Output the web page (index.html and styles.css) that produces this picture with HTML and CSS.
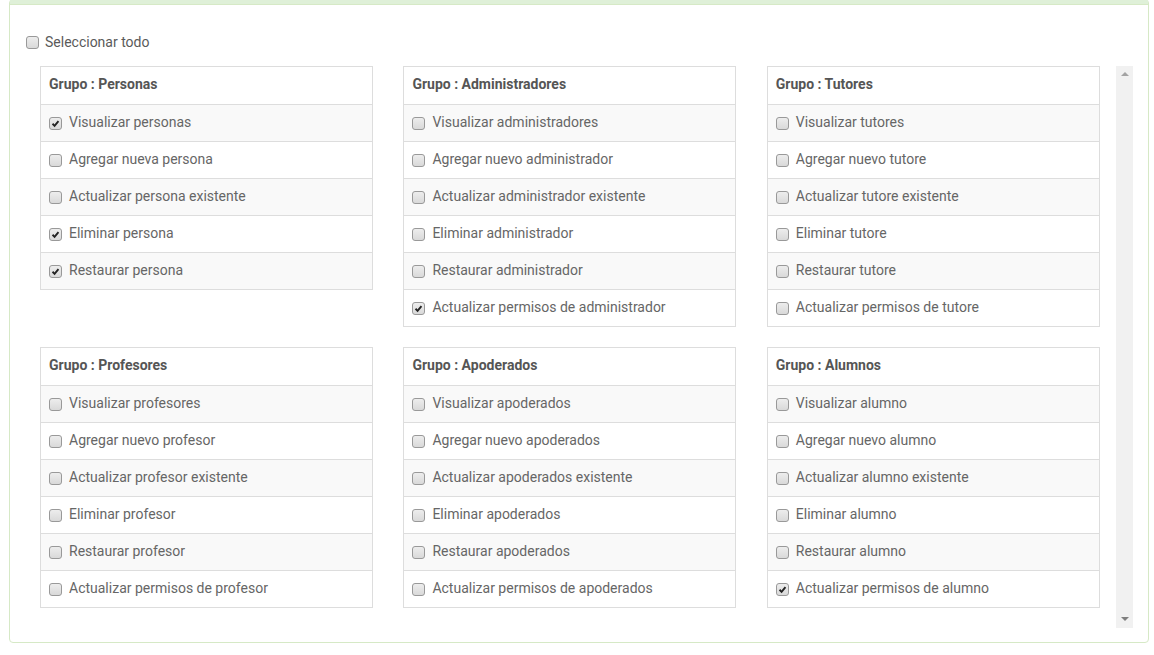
FILE: index.html
```html
<!DOCTYPE html>
<html lang="es">
<head>
<meta charset="utf-8">
<title>Permisos</title>
<link rel="stylesheet" href="styles.css">
</head>
<body>
<div class="panel">
  <div class="panel-heading"></div>
  <div class="panel-body">
    <label class="select-all"><span class="cb"></span>Seleccionar todo</label>
    <div class="scroll">
      <div class="scroll-content">
        <div class="group">
          <div class="group-head">Grupo : Personas</div>
          <div class="row"><span class="cb on"><svg viewBox="0 0 13 13"><path d="M3 6.8 5.4 9.2 10 3.6"/></svg></span>Visualizar personas</div>
          <div class="row"><span class="cb"></span>Agregar nueva persona</div>
          <div class="row"><span class="cb"></span>Actualizar persona existente</div>
          <div class="row"><span class="cb on"><svg viewBox="0 0 13 13"><path d="M3 6.8 5.4 9.2 10 3.6"/></svg></span>Eliminar persona</div>
          <div class="row"><span class="cb on"><svg viewBox="0 0 13 13"><path d="M3 6.8 5.4 9.2 10 3.6"/></svg></span>Restaurar persona</div>
        </div>
        <div class="group">
          <div class="group-head">Grupo : Administradores</div>
          <div class="row"><span class="cb"></span>Visualizar administradores</div>
          <div class="row"><span class="cb"></span>Agregar nuevo administrador</div>
          <div class="row"><span class="cb"></span>Actualizar administrador existente</div>
          <div class="row"><span class="cb"></span>Eliminar administrador</div>
          <div class="row"><span class="cb"></span>Restaurar administrador</div>
          <div class="row"><span class="cb on"><svg viewBox="0 0 13 13"><path d="M3 6.8 5.4 9.2 10 3.6"/></svg></span>Actualizar permisos de administrador</div>
        </div>
        <div class="group">
          <div class="group-head">Grupo : Tutores</div>
          <div class="row"><span class="cb"></span>Visualizar tutores</div>
          <div class="row"><span class="cb"></span>Agregar nuevo tutore</div>
          <div class="row"><span class="cb"></span>Actualizar tutore existente</div>
          <div class="row"><span class="cb"></span>Eliminar tutore</div>
          <div class="row"><span class="cb"></span>Restaurar tutore</div>
          <div class="row"><span class="cb"></span>Actualizar permisos de tutore</div>
        </div>
        <div class="group">
          <div class="group-head">Grupo : Profesores</div>
          <div class="row"><span class="cb"></span>Visualizar profesores</div>
          <div class="row"><span class="cb"></span>Agregar nuevo profesor</div>
          <div class="row"><span class="cb"></span>Actualizar profesor existente</div>
          <div class="row"><span class="cb"></span>Eliminar profesor</div>
          <div class="row"><span class="cb"></span>Restaurar profesor</div>
          <div class="row"><span class="cb"></span>Actualizar permisos de profesor</div>
        </div>
        <div class="group">
          <div class="group-head">Grupo : Apoderados</div>
          <div class="row"><span class="cb"></span>Visualizar apoderados</div>
          <div class="row"><span class="cb"></span>Agregar nuevo apoderados</div>
          <div class="row"><span class="cb"></span>Actualizar apoderados existente</div>
          <div class="row"><span class="cb"></span>Eliminar apoderados</div>
          <div class="row"><span class="cb"></span>Restaurar apoderados</div>
          <div class="row"><span class="cb"></span>Actualizar permisos de apoderados</div>
        </div>
        <div class="group">
          <div class="group-head">Grupo : Alumnos</div>
          <div class="row"><span class="cb"></span>Visualizar alumno</div>
          <div class="row"><span class="cb"></span>Agregar nuevo alumno</div>
          <div class="row"><span class="cb"></span>Actualizar alumno existente</div>
          <div class="row"><span class="cb"></span>Eliminar alumno</div>
          <div class="row"><span class="cb"></span>Restaurar alumno</div>
          <div class="row"><span class="cb on"><svg viewBox="0 0 13 13"><path d="M3 6.8 5.4 9.2 10 3.6"/></svg></span>Actualizar permisos de alumno</div>
        </div>
      </div>
      <div class="scrollbar">
        <span class="arrow-up"></span>
        <span class="arrow-down"></span>
      </div>
    </div>
  </div>
</div>
</body>
</html>
```
FILE: styles.css
```css
* { box-sizing: border-box; }
html, body { margin: 0; padding: 0; background: #fff; }
body {
  font-family: Roboto, "Liberation Sans", sans-serif;
  font-size: 14px;
  line-height: 20px;
  color: #666;
  overflow: hidden;
}
.panel {
  margin: -1px 5px 0 9px;
  border: 1px solid #d6e9c6;
  border-radius: 4px;
  background: #fff;
}
.panel-heading {
  height: 5px;
  background: #dff0d8;
  border-bottom: 1px solid #d6e9c6;
}
.panel-body {
  padding: 27px 15px 14px 15px;
}
.select-all {
  display: flex;
  align-items: center;
  height: 20px;
  margin: 0 0 14px 1px;
  color: #5a5a5a;
}
.select-all .cb {
  margin-right: 6px;
}
.cb {
  flex: none;
  width: 13px;
  height: 13px;
  margin-right: 7px;
  border: 1px solid #999;
  border-radius: 3px;
  background: linear-gradient(#ededed, #d9d9d9);
  display: inline-flex;
}
.cb svg {
  width: 11px;
  height: 11px;
}
.cb svg path {
  fill: none;
  stroke: #222;
  stroke-width: 2.2;
}
.scroll {
  display: flex;
  height: 562px;
}
.scroll-content {
  flex: 1;
  display: grid;
  grid-template-columns: repeat(3, 333px);
  column-gap: 30.4px;
  row-gap: 20px;
  align-items: start;
  align-content: start;
  padding: 0 15px;
}
.scrollbar {
  flex: none;
  width: 17px;
  background: #f1f1f1;
  display: flex;
  flex-direction: column;
  justify-content: space-between;
  align-items: center;
  padding: 6px 0 7px;
}
.arrow-up {
  width: 0;
  height: 0;
  border-left: 4px solid transparent;
  border-right: 4px solid transparent;
  border-bottom: 4px solid #a3a3a3;
}
.arrow-down {
  width: 0;
  height: 0;
  border-left: 4px solid transparent;
  border-right: 4px solid transparent;
  border-top: 4px solid #7f7f7f;
}
.group {
  border: 1px solid #ddd;
}
.group-head {
  height: 37px;
  padding: 7px 8px 0;
  font-weight: 700;
  color: #555;
}
.row {
  height: 37px;
  padding: 7px 8px 0;
  border-top: 1px solid #ddd;
  display: flex;
  align-items: flex-start;
}
.row .cb {
  margin-top: 5px;
}
.row:nth-child(even) {
  background: #f9f9f9;
}
```
